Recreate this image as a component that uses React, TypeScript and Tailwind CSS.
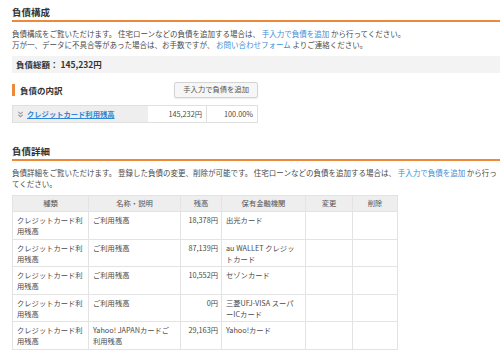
const rows = [
  { kind: "クレジットカード利用残高", name: "ご利用残高", amount: "18,378円", bank: "出光カード" },
  { kind: "クレジットカード利用残高", name: "ご利用残高", amount: "87,139円", bank: "au WALLET クレジットカード" },
  { kind: "クレジットカード利用残高", name: "ご利用残高", amount: "10,552円", bank: "セゾンカード" },
  { kind: "クレジットカード利用残高", name: "ご利用残高", amount: "0円", bank: "三菱UFJ-VISA スーパーICカード" },
  { kind: "クレジットカード利用残高", name: "Yahoo! JAPANカードご利用残高", amount: "29,163円", bank: "Yahoo!カード" },
];

function Heading({ children }: { children: React.ReactNode }) {
  return (
    <div className="border-b-2 border-[#ec8a3a] pb-[1px]">
      <h2 className="text-[9.5px] font-bold leading-[14px] text-[#333]">{children}</h2>
    </div>
  );
}

export default function App() {
  return (
    <div className="bg-white w-[500px] h-[361px] overflow-hidden font-['Noto_Sans_CJK_JP',sans-serif] text-[#4a4a4a]">
      <div className="w-[488px] ml-[12px] pt-[5px]">
        <Heading>負債構成</Heading>
        <p className="mt-[6px] text-[7.5px] leading-[11px]">
          負債構成をご覧いただけます。 住宅ローンなどの負債を追加する場合は、 <a className="text-[#3b8fd6]">手入力で負債を追加</a> から行ってください。
          <br />
          万が一、データに不具合等があった場合は、お手数ですが、 <a className="text-[#3b8fd6]">お問い合わせフォーム</a> よりご連絡ください。
        </p>
        <div className="mt-[6px] h-[17px] bg-[#f3f3f3] pl-[4px] flex items-center text-[8.5px] font-bold text-[#333]">
          負債総額： 145,232円
        </div>

        {/* 負債の内訳 */}
        <div className="mt-[9px] w-[246px] flex items-center justify-between">
          <div className="flex items-center gap-[5px]">
            <span className="w-[3px] h-[12px] bg-[#ec8a3a]" />
            <span className="text-[8.5px] font-bold text-[#333]">負債の内訳</span>
          </div>
          <button className="h-[16px] px-[8px] bg-[#f6f6f6] border border-[#d4d4d4] rounded-[2px] shadow-[0_1px_1px_rgba(0,0,0,0.08)] text-[7.3px] leading-none text-[#555]">
            手入力で負債を追加
          </button>
        </div>
        <div className="mt-[7px] w-[246px] h-[18px] flex border border-[#e0e0e0] text-[7.3px]">
          <div className="w-[135px] bg-[#eeeeee] flex items-center pl-[4px] gap-[3px]">
            <svg width="7" height="7" viewBox="0 0 8 8" fill="none" stroke="#9a9a9a" strokeWidth="1.2">
              <path d="M1.5 1 L4 3.2 L6.5 1" />
              <path d="M1.5 4.3 L4 6.5 L6.5 4.3" />
            </svg>
            <a className="text-[#2f86d4] underline font-bold">クレジットカード利用残高</a>
          </div>
          <div className="w-[59px] border-r border-[#e0e0e0] flex items-center justify-end pr-[4px]">145,232円</div>
          <div className="flex-1 flex items-center justify-end pr-[4px]">100.00%</div>
        </div>

        {/* 負債詳細 */}
        <div className="mt-[21px]">
          <Heading>負債詳細</Heading>
        </div>
        <p className="mt-[6px] text-[7.5px] leading-[11px]">
          負債詳細をご覧いただけます。 登録した負債の変更、削除が可能です。 住宅ローンなどの負債を追加する場合は、 <a className="text-[#3b8fd6]">手入力で負債を追加</a> から行ってください。
        </p>
        <table className="mt-[6px] w-[385px] table-fixed border-collapse text-[7.3px] leading-[11px]">
          <colgroup>
            <col className="w-[76px]" />
            <col className="w-[92px]" />
            <col className="w-[41px]" />
            <col className="w-[84px]" />
            <col className="w-[47px]" />
            <col className="w-[45px]" />
          </colgroup>
          <thead>
            <tr className="h-[16px] bg-[#eeeeee] text-[#555]">
              {["種類", "名称・説明", "残高", "保有金融機関", "変更", "削除"].map((h) => (
                <th key={h} className="border border-[#e3e3e3] font-normal text-center">{h}</th>
              ))}
            </tr>
          </thead>
          <tbody>
            {rows.map((r, i) => (
              <tr key={i} className="h-[27.6px] align-top">
                <td className="border border-[#e3e3e3] px-[4px] pt-[3px]">{r.kind}</td>
                <td className="border border-[#e3e3e3] px-[4px] pt-[3px]">{r.name}</td>
                <td className="border border-[#e3e3e3] px-[3px] pt-[3px] text-right">{r.amount}</td>
                <td className="border border-[#e3e3e3] pl-[4px] pr-[8px] pt-[3px]">{r.bank}</td>
                <td className="border border-[#e3e3e3]" />
                <td className="border border-[#e3e3e3]" />
              </tr>
            ))}
          </tbody>
        </table>
      </div>
    </div>
  );
}
